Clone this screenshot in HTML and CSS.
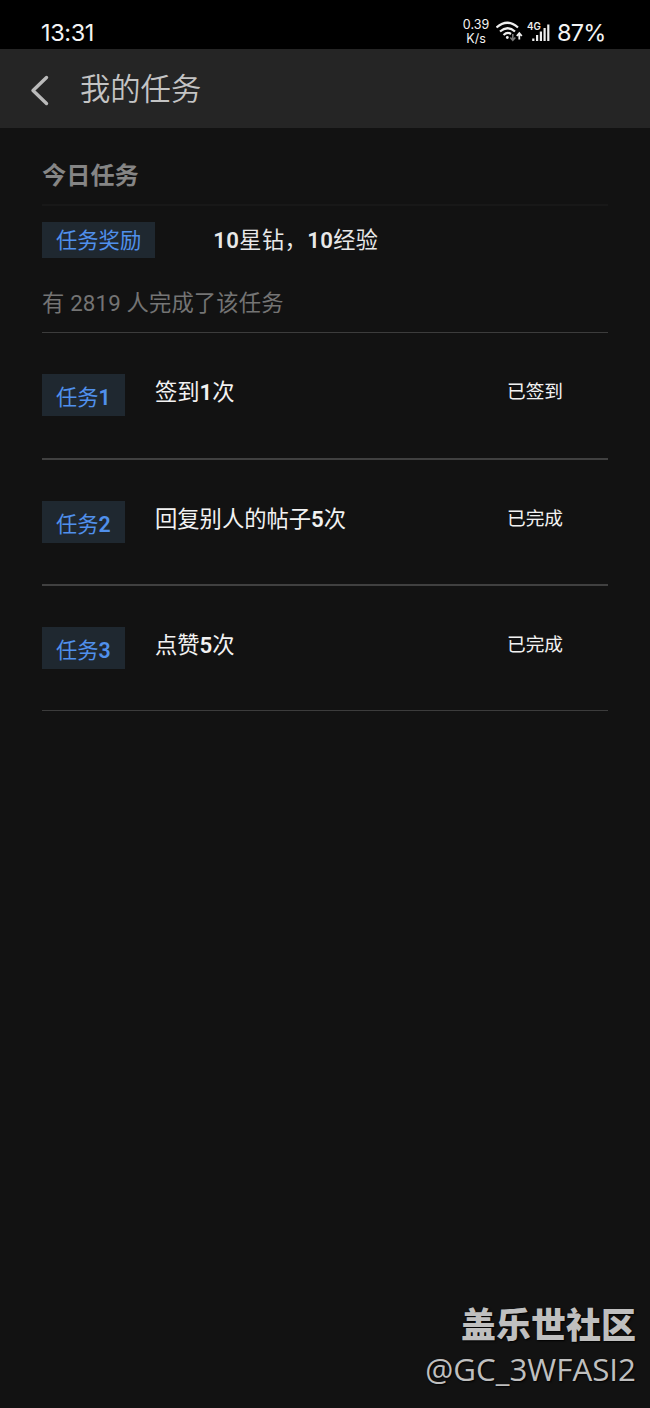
FILE: index.html
```html
<!DOCTYPE html>
<html lang="zh-CN">
<head>
  <meta charset="UTF-8">
  <meta name="viewport" content="width=device-width, initial-scale=1.0">
  <title>我的任务</title>
  <link rel="stylesheet" href="styles.css">
</head>
<body>
  <div class="status-bar">
    <span class="time">13:31</span>
    <div class="status-icons">
      <div class="speed"><span>0.39</span><span>K/s</span></div>
      <svg class="wifi" width="28" height="24" viewBox="0 0 28 24" fill="none" stroke="#eee" stroke-width="2.200">
        <path d="M.5 7.500Q11.500 -2 22 7.500"/>
        <path d="M4 11.500Q11.500 5 19 11.500"/>
        <path d="M7.500 15Q11.500 11.500 15 14"/>
        <circle cx="11.300" cy="17.500" r="1.400" fill="#eee" stroke="none"/>
        <path d="M16.800 14v6M14.300 17.500l2.500 2.800 2.500-2.800" stroke="#777" stroke-width="1.600"/>
        <path d="M23.300 19.500v-6M20.800 16l2.500-2.800 2.500 2.800" stroke-width="1.800"/>
      </svg>
      <svg class="signal" width="24" height="24" viewBox="0 0 24 24" fill="#eee">
        <text x="0" y="9.500" class="net">4G</text>
        <rect x="5.200" y="18.500" width="2.200" height="2.500"/>
        <rect x="9" y="15" width="2.200" height="6"/>
        <rect x="12.800" y="11.500" width="2.200" height="9.500"/>
        <rect x="16.500" y="8" width="2.200" height="13"/>
        <rect x="20.200" y="4.500" width="2.200" height="16.500"/>
      </svg>
      <span class="battery">87%</span>
    </div>
  </div>

  <header class="nav-bar">
    <svg width="20" height="32" viewBox="0 0 20 32" fill="none" stroke="#bababa" stroke-width="3.400" stroke-linecap="round" stroke-linejoin="round">
      <path d="M16.500 2.500L3 15.500L16.500 28.500"/>
    </svg>
    <h1>我的任务</h1>
  </header>

  <main class="content">
    <h2>今日任务</h2>
    <div class="reward">
      <span class="tag">任务奖励</span>
      <p><b>10</b>星钻，<b>10</b>经验</p>
    </div>
    <p class="count">有 2819 人完成了该任务</p>

    <ul class="tasks">
      <li>
        <span class="tag">任务<b>1</b></span>
        <span class="name">签到<b>1</b>次</span>
        <span class="state">已签到</span>
      </li>
      <li>
        <span class="tag">任务<b>2</b></span>
        <span class="name">回复别人的帖子<b>5</b>次</span>
        <span class="state">已完成</span>
      </li>
      <li>
        <span class="tag">任务<b>3</b></span>
        <span class="name">点赞<b>5</b>次</span>
        <span class="state">已完成</span>
      </li>
    </ul>
  </main>

  <footer class="watermark">
    <strong>盖乐世社区</strong>
    <span>@GC_3WFASI2</span>
  </footer>
</body>
</html>
```
FILE: styles.css
```css
* {
  box-sizing: border-box;
  margin: 0;
  padding: 0;
}

body {
  display: flex;
  flex-direction: column;
  height: 1408px;
  background-color: #121212;
  color: #f2f2f2;
  font-family: Roboto, "Noto Sans CJK SC", sans-serif;
}

b {
  font-weight: 600;
}

.status-bar {
  display: flex;
  justify-content: space-between;
  height: 49px;
  padding: 15px 45px 0 41px;
  background-color: #000;
  font-family: Inter, sans-serif;
  color: #f4f4f4;
}

.time {
  font-size: 23.5px;
  line-height: 35px;
  letter-spacing: -0.4px;
}

.status-icons {
  display: flex;
}

.speed {
  display: flex;
  flex-direction: column;
  align-items: center;
  width: 26px;
  padding-top: 3px;
  font-size: 12.5px;
  line-height: 14px;
}

.wifi {
  margin: 5px 0 0 7px;
}

.signal {
  margin: 5px 0 0 3px;
}

.net {
  font-size: 9.8px;
  font-weight: 600;
}

.battery {
  margin-left: 6px;
  width: 48px;
  font-size: 23.5px;
  line-height: 35px;
  letter-spacing: -0.8px;
  white-space: nowrap;
}

.nav-bar {
  display: flex;
  align-items: center;
  height: 79px;
  padding: 4px 30px 0;
  background-color: #252525;
}

.nav-bar h1 {
  margin: -2px 0 0 30px;
  font-size: 30.3px;
  font-weight: 350;
  line-height: 44px;
  color: #c4c4c4;
}

.content {
  flex: 1;
  padding: 0 42px;
}

.content h2 {
  height: 78px;
  padding-top: 30px;
  border-bottom: 2px solid #181818;
  font-size: 24.2px;
  line-height: 37px;
  color: #858585;
}

.tag {
  display: block;
  padding: 0 14px;
  background-color: #1f2830;
  color: #5090ec;
  font-size: 21.3px;
  line-height: 36px;
}

.reward {
  display: flex;
  height: 52px;
  padding-top: 16px;
}

.reward .tag {
  height: 36px;
  line-height: 38px;
}

.reward p {
  margin-left: 58px;
  font-size: 22.2px;
  letter-spacing: 0.4px;
  line-height: 36px;
  color: #e8e8e8;
}

.count {
  height: 75px;
  padding-top: 27px;
  border-bottom: 1px solid #3c3c3c;
  font-size: 22.3px;
  letter-spacing: 0.15px;
  line-height: 36px;
  color: #747474;
}

.tasks {
  list-style: none;
}

.tasks li {
  display: grid;
  grid-template-columns: 83px 1fr 101px;
  column-gap: 30px;
  align-items: start;
  height: 126px;
  padding-top: 41px;
  border-bottom: 2px solid #404040;
}

.tasks li:first-child {
  height: 127px;
}

.tasks li:last-child {
  height: 125px;
  border-bottom: 1px solid #3c3c3c;
}

.tasks .tag {
  height: 42px;
  line-height: 47px;
}

.name {
  font-size: 22.3px;
  line-height: 37px;
}

.state {
  font-size: 18.7px;
  line-height: 36px;
}

.watermark {
  display: flex;
  flex-direction: column;
  align-items: flex-end;
  padding: 0 14px 18px 0;
  color: #bfbfbf;
  text-shadow: 1px 1px 2px #000;
}

.watermark strong {
  font-size: 35px;
  font-weight: 900;
  line-height: 45px;
}

.watermark span {
  font-family: "Open Sans", sans-serif;
  font-size: 31.3px;
  line-height: 41px;
}
```
